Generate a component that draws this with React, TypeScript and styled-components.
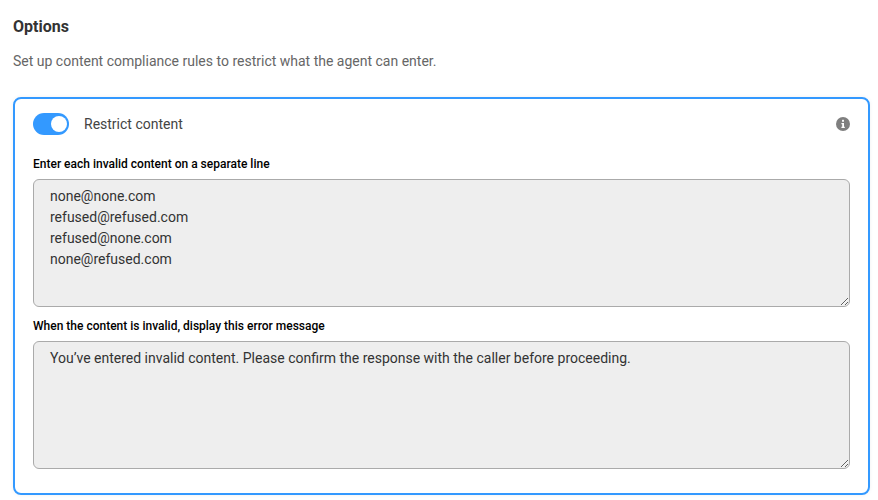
import React from "react";
import styled, { createGlobalStyle } from "styled-components";

const Global = createGlobalStyle`
  html, body { margin: 0; padding: 0; background: #fff; overflow: hidden; }
  * { box-sizing: border-box; }
`;

const Page = styled.div`
  width: 878px;
  height: 500px;
  padding: 17px 8px 0 13px;
  font-family: Roboto, "Liberation Sans", sans-serif;
  overflow: hidden;
`;

const Title = styled.h2`
  margin: 0;
  font-size: 16px;
  line-height: 20px;
  font-weight: 700;
  color: #333;
`;

const Subtitle = styled.p`
  margin: 14px 0 0;
  font-size: 14px;
  line-height: 20px;
  color: #666;
`;

const Card = styled.section`
  margin-top: 26px;
  width: 857px;
  height: 398px;
  border: 2px solid #3399ff;
  border-radius: 8px;
  padding: 14px 18px 0;
  box-shadow: 0 0 4px rgba(0, 0, 0, 0.06);
`;

const Header = styled.div`
  display: flex;
  align-items: center;
  height: 22px;
`;

const Toggle = styled.span`
  display: flex;
  justify-content: flex-end;
  align-items: center;
  width: 36px;
  height: 22px;
  padding: 2px 2px;
  border-radius: 11px;
  background: #3399ff;
`;

const Knob = styled.span`
  width: 16px;
  height: 16px;
  border-radius: 50%;
  background: #fff;
`;

const ToggleLabel = styled.span`
  margin-left: 15px;
  font-size: 14px;
  color: #444;
  flex: 1;
`;

const InfoIcon = styled.svg`
  width: 14px;
  height: 14px;
  display: block;
`;

const FieldLabel = styled.label<{ $top: number }>`
  display: block;
  margin-top: ${(p) => p.$top}px;
  font-size: 12px;
  line-height: 16px;
  font-weight: 500;
  color: #000;
`;

const Area = styled.textarea`
  display: block;
  width: 817px;
  height: 128px;
  margin-top: 7px;
  padding: 6px 16px;
  border: 1px solid #aaa;
  border-radius: 6px;
  background: #eeeeee;
  color: #333;
  font-family: Roboto, "Liberation Sans", sans-serif;
  font-size: 14px;
  line-height: 21px;
  resize: vertical;
  outline: none;
  opacity: 1;
`;

export default function App() {
  return (
    <Page>
      <Global />
      <Title>Options</Title>
      <Subtitle>Set up content compliance rules to restrict what the agent can enter.</Subtitle>
      <Card>
        <Header>
          <Toggle>
            <Knob />
          </Toggle>
          <ToggleLabel>Restrict content</ToggleLabel>
          <InfoIcon viewBox="0 0 14 14">
            <circle cx="7" cy="7" r="7" fill="#7f7f7f" />
            <rect x="6" y="2.8" width="2" height="2" rx="0.5" fill="#fff" />
            <path d="M5.4 6h2.6v3.8h.8V11H5.4V9.8h.8V7.2h-.8z" fill="#fff" />
          </InfoIcon>
        </Header>
        <FieldLabel $top={21}>Enter each invalid content on a separate line</FieldLabel>
        <Area
          disabled
          readOnly
          value={"none@none.com\nrefused@refused.com\nrefused@none.com\nnone@refused.com"}
        />
        <FieldLabel $top={11}>When the content is invalid, display this error message</FieldLabel>
        <Area
          disabled
          readOnly
          value="You’ve entered invalid content. Please confirm the response with the caller before proceeding."
        />
      </Card>
    </Page>
  );
}
